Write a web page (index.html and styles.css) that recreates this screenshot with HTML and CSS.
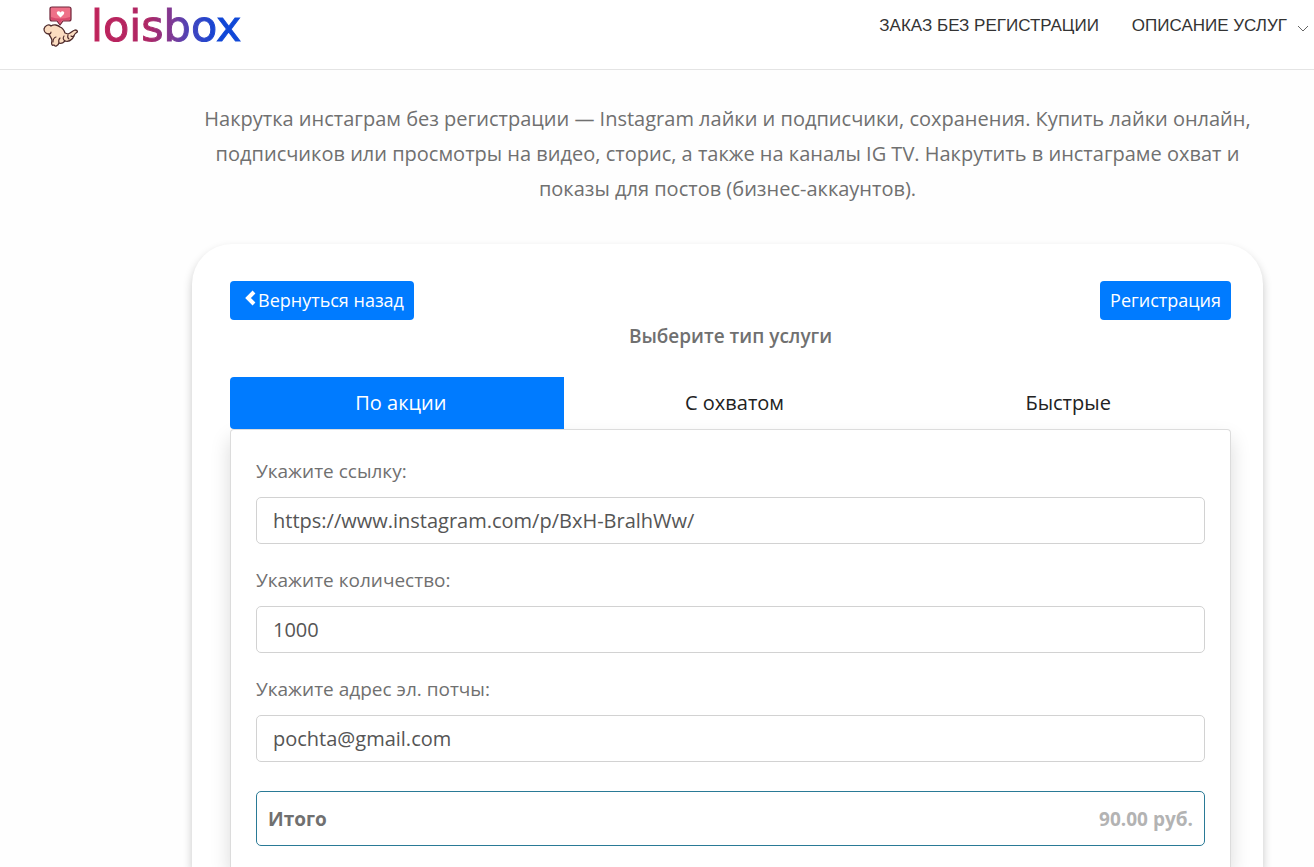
FILE: index.html
```html
<!DOCTYPE html>
<html lang="ru">
<head>
  <meta charset="UTF-8">
  <title>loisbox</title>
  <meta name="viewport" content="width=device-width, initial-scale=1">
  <link rel="stylesheet" href="styles.css">
</head>
<body>
  <header class="header">
    <a class="logo" href="#">
      <svg class="logo-icon" viewBox="0 0 36 42" aria-hidden="true">
        <path d="M9 2h17q2 0 2 2v10q0 2-2 2h-6l-3 4-3-4H9q-2 0-2-2V4q0-2 2-2z" fill="#ee7088" stroke="#6e2438" stroke-width="1.2" stroke-linejoin="round"/>
        <path d="M8 12q9 3 19 0v2q0 1-1 1h-7l-2 3-3-3H9q-1 0-1-1z" fill="#d94a6e"/>
        <path d="M17.500 12.500l-3.500-3.500q-1-2 1-2.800 1.600-.3 2.500 1.300.9-1.600 2.500-1.300 2 .8 1 2.800z" fill="#fff"/>
        <path d="M1 24C2 20 6 19 8 21c3-2 7-1 9 1 3 1 4 3 5 6l3 1c3-1 4-3 7-4 3 0 3 2 1 3-2 1-2 4-4 6-2 2-4 3-7 2-2 2-4 3-6 2-1 3-4 4-5 2-2 1-3-1-2-4 0-3-2-4-3-7-3 0-5-2-5-5z" fill="#fbdcc0" stroke="#4f2b2b" stroke-width="1.3" stroke-linejoin="round"/>
        <path d="M6 29q2 0 2-2m2 10q0-4 3-5m3 6q-1-3 1-5m5 3q-3-2-1-5m5 3q-2-1-1-4m3 1q1 1 3 0" fill="none" stroke="#4f2b2b" stroke-width="1.100" stroke-linecap="round"/>
      </svg>
      <span class="logo-text">loisbox</span>
    </a>
    <nav class="nav">
      <a href="#">ЗАКАЗ БЕЗ РЕГИСТРАЦИИ</a>
      <a href="#">ОПИСАНИЕ УСЛУГ
        <svg class="nav-arrow" viewBox="0 0 12 8" aria-hidden="true"><path d="M1 1l5 5 5-5" fill="none" stroke="#666"/></svg>
      </a>
    </nav>
  </header>

  <main class="main">
    <p class="intro">Накрутка инстаграм без регистрации — Instagram лайки и подписчики, сохранения. Купить лайки онлайн, подписчиков или просмотры на видео, сторис, а также на каналы IG TV. Накрутить в инстаграме охват и показы для постов (бизнес-аккаунтов).</p>

    <section class="card">
      <div class="card-top">
        <button class="btn" type="button"><svg class="btn-arrow" viewBox="0 0 12 16" aria-hidden="true"><path d="M10 2L4 8l6 6" fill="none" stroke="#fff" stroke-width="4"/></svg>Вернуться назад</button>
        <button class="btn" type="button">Регистрация</button>
      </div>
      <h2 class="card-title">Выберите тип услуги</h2>

      <div class="tabs" role="tablist">
        <button class="tab active" type="button" role="tab" aria-selected="true">По акции</button>
        <button class="tab" type="button" role="tab" aria-selected="false">С охватом</button>
        <button class="tab" type="button" role="tab" aria-selected="false">Быстрые</button>
      </div>

      <form class="order">
        <div class="field">
          <label for="link">Укажите ссылку:</label>
          <input id="link" type="text" value="https://www.instagram.com/p/BxH-BralhWw/">
        </div>
        <div class="field">
          <label for="count">Укажите количество:</label>
          <input id="count" type="text" value="1000">
        </div>
        <div class="field">
          <label for="email">Укажите адрес эл. потчы:</label>
          <input id="email" type="email" value="pochta@gmail.com">
        </div>
        <div class="total">
          <span>Итого</span>
          <span class="total-sum">90.00 руб.</span>
        </div>
      </form>
    </section>
  </main>
</body>
</html>
```

FILE: styles.css
```css
* {
  box-sizing: border-box;
}
body {
  margin: 0;
  background: #fefefe;
  color: #707070;
  font-family: "Open Sans", sans-serif;
  font-size: 20px;
}
.header {
  display: flex;
  justify-content: space-between;
  align-items: flex-start;
  height: 70px;
  padding: 0 5px 0 43px;
  background: #fff;
  border-bottom: 1px solid #e4e4e4;
}
.logo {
  display: flex;
  gap: 12px;
  padding-top: 5px;
  text-decoration: none;
}
.logo-icon {
  width: 36px;
  height: 42px;
}
.logo-text {
  font-family: "DejaVu Sans", sans-serif;
  font-size: 43px;
  line-height: 42px;
  color: transparent;
  background: linear-gradient(90deg, #c0225a 0%, #ae2765 38%, #7a3a98 55%, #3f45c0 68%, #0f45d6 85%, #1049d8 100%);
  -webkit-background-clip: text;
  background-clip: text;
  -webkit-text-stroke: 1px transparent;
}
.nav {
  display: flex;
  gap: 33px;
  padding-top: 15px;
}
.nav a {
  display: flex;
  align-items: center;
  gap: 10px;
  color: #333;
  font-family: "Liberation Sans", sans-serif;
  font-size: 17px;
  line-height: 22px;
  text-decoration: none;
}
.nav-arrow {
  width: 12px;
  height: 8px;
  margin-top: 6px;
}
.main {
  padding: 31px 51px 0 192px;
}
.intro {
  margin: 0 0 38px;
  line-height: 35px;
  text-align: center;
}
.card {
  padding: 37px 32px 0 38px;
  background: #fff;
  border-radius: 40px 40px 0 0;
  box-shadow: 0 5px 10px rgba(0, 0, 0, 0.22);
}
.card-top {
  display: flex;
  justify-content: space-between;
}
.btn {
  display: flex;
  align-items: center;
  height: 39px;
  padding: 0 10px 2px;
  border: 0;
  border-radius: 4px;
  background: #007bff;
  color: #fff;
  font: 18px "Open Sans", sans-serif;
  cursor: pointer;
}
.btn-arrow {
  width: 12px;
  height: 16px;
  margin: 0 2px 4px 4px;
}
.card-title {
  margin: 0 0 24px;
  font-size: 19px;
  line-height: 33px;
  font-weight: 600;
  text-align: center;
}
.tabs {
  display: grid;
  grid-template-columns: repeat(3, 1fr);
}
.tab {
  height: 52px;
  padding: 0 0 2px 8px;
  border: 0;
  border-radius: 4px;
  background: transparent;
  color: #222;
  font: 20px "Open Sans", sans-serif;
  cursor: pointer;
}
.tab.active {
  border-radius: 4px 0 0 4px;
  background: #007bff;
  color: #fff;
}
.order {
  padding: 25px 25px 21px;
  background: #fff;
  border: 1px solid #dcdcdc;
  border-bottom: 0;
  border-radius: 4px 4px 0 0;
  box-shadow: 0 10px 20px rgba(0, 0, 0, 0.15);
}
.field {
  margin-bottom: 20px;
}
.field label {
  display: block;
  margin-bottom: 10px;
  font-size: 19px;
  line-height: 32px;
}
.field input {
  display: block;
  width: 100%;
  height: 47px;
  padding: 0 16px;
  border: 1px solid #d2d2d2;
  border-radius: 5px;
  background: #fff;
  color: #555;
  font: 20px "Open Sans", sans-serif;
}
.total {
  display: flex;
  justify-content: space-between;
  align-items: center;
  height: 55px;
  margin-top: 29px;
  padding: 0 11px;
  border: 1px solid #2a7a96;
  border-radius: 5px;
  font-size: 19px;
  font-weight: 700;
}
.total-sum {
  color: #b3b3b3;
}
```
